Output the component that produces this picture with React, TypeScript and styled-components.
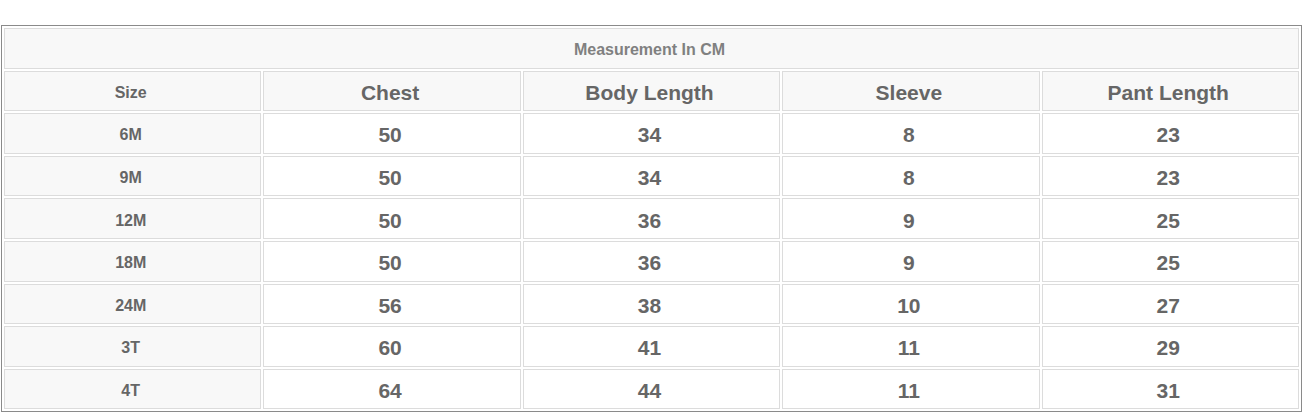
import React from "react";
import styled, { createGlobalStyle } from "styled-components";

const Global = createGlobalStyle`
  html, body { margin: 0; padding: 0; background: #fff; }
  body { font-family: "Liberation Sans", Arial, Helvetica, sans-serif; }
`;

const Page = styled.div`
  padding: 25px 1px 0 1px;
`;

const Table = styled.table`
  width: 100%;
  border: 1px solid #8a8a8a;
  border-collapse: separate;
  border-spacing: 2px;
  table-layout: fixed;
`;

const Row = styled.tr`
  height: 40.6px;
`;

const Cell = styled.td<{ $shade?: boolean; $size?: number; $tone?: string }>`
  border: 1px solid #dcdcdc;
  background: ${(p) => (p.$shade ? "#f8f8f8" : "#ffffff")};
  color: ${(p) => p.$tone ?? "#666666"};
  font-weight: bold;
  font-size: ${(p) => p.$size ?? 21}px;
  text-align: center;
  vertical-align: middle;
  padding: 4px 4px 0 0;
`;

const columns = ["Chest", "Body Length", "Sleeve", "Pant Length"];
const rows: [string, number[]][] = [
  ["6M", [50, 34, 8, 23]],
  ["9M", [50, 34, 8, 23]],
  ["12M", [50, 36, 9, 25]],
  ["18M", [50, 36, 9, 25]],
  ["24M", [56, 38, 10, 27]],
  ["3T", [60, 41, 11, 29]],
  ["4T", [64, 44, 11, 31]],
];

export default function App() {
  return (
    <>
      <Global />
      <Page>
        <Table>
          <tbody>
            <Row>
              <Cell colSpan={5} $shade $size={16} $tone="#808080">
                Measurement In CM
              </Cell>
            </Row>
            <Row>
              <Cell $shade $size={16}>Size</Cell>
              {columns.map((c) => (
                <Cell key={c} $shade>
                  {c}
                </Cell>
              ))}
            </Row>
            {rows.map(([size, vals]) => (
              <Row key={size}>
                <Cell $shade $size={16}>{size}</Cell>
                {vals.map((v, i) => (
                  <Cell key={i}>{v}</Cell>
                ))}
              </Row>
            ))}
          </tbody>
        </Table>
      </Page>
    </>
  );
}
